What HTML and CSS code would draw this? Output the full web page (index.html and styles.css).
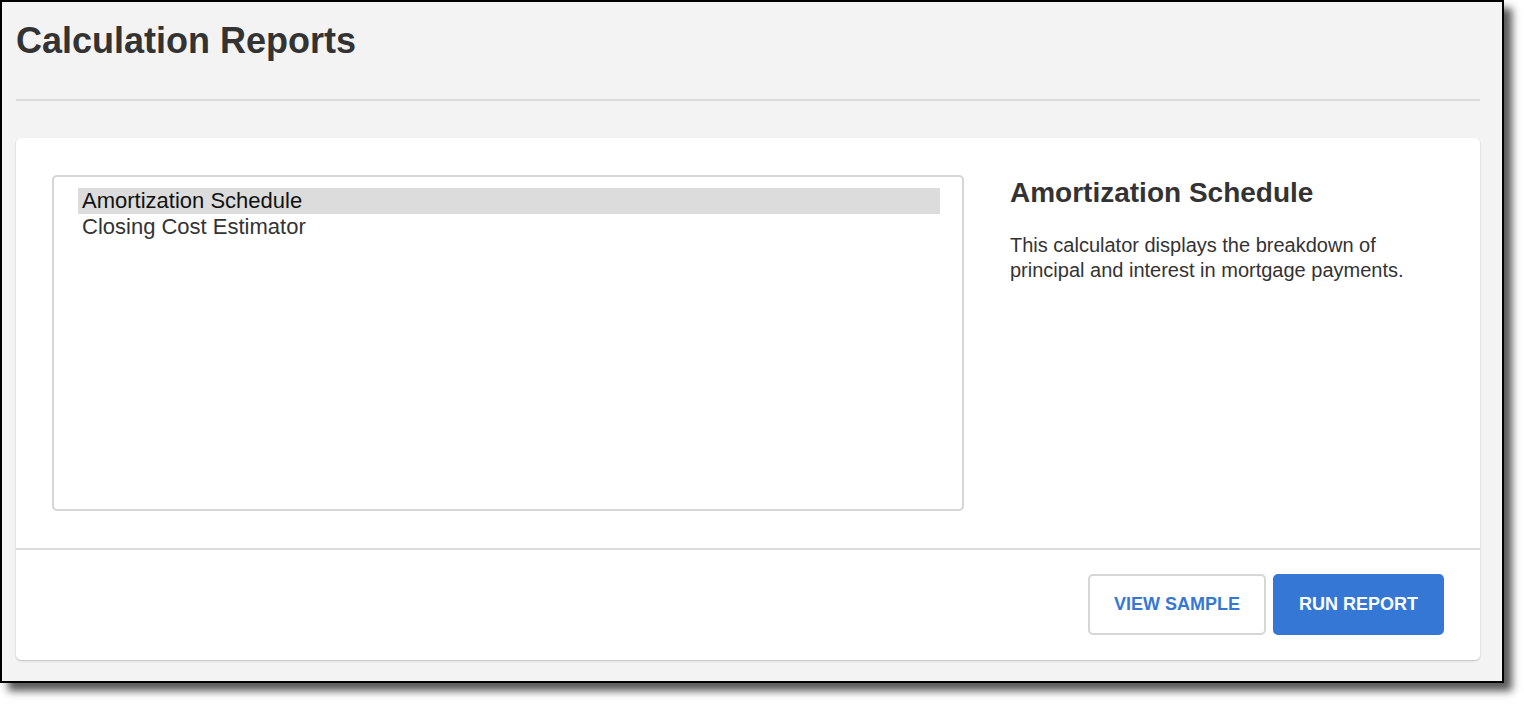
FILE: index.html
```html
<!DOCTYPE html>
<html lang="en">
<head>
<meta charset="utf-8">
<title>Calculation Reports</title>
<link rel="stylesheet" href="styles.css">
</head>
<body>
<div class="window">
  <h1 class="title">Calculation Reports</h1>
  <div class="rule"></div>
  <section class="card">
    <div class="card-body">
      <div class="listbox" role="listbox">
        <div class="option selected" role="option">Amortization Schedule</div>
        <div class="option" role="option">Closing Cost Estimator</div>
      </div>
      <div class="details">
        <h2 class="details-title">Amortization Schedule</h2>
        <p class="details-text">This calculator displays the breakdown of principal and interest in mortgage payments.</p>
      </div>
    </div>
    <div class="card-footer">
      <button class="btn btn-outline">VIEW SAMPLE</button>
      <button class="btn btn-primary">RUN REPORT</button>
    </div>
  </section>
</div>
</body>
</html>
```

FILE: styles.css
```css
html, body {
  margin: 0;
  padding: 0;
  background: #ffffff;
}

html {
  min-height: 100%;
}

body {
  min-height: 704px;
  box-sizing: border-box;
  padding-bottom: 21px;
  font-family: "Liberation Sans", Arial, sans-serif;
  color: #333333;
}

.window {
  width: 1504px;
  height: 683px;
  box-sizing: border-box;
  border: 2px solid #000000;
  background: #f3f3f3;
  box-shadow: 8px 8px 8px rgba(0, 0, 0, 0.66);
  padding: 18px 22px 0 14px;
}

.title {
  margin: 0;
  font-size: 36px;
  line-height: 42px;
  font-weight: 700;
  color: #333333;
}

.rule {
  height: 2px;
  background: #dcdcdc;
  margin: 37px 0;
}

.card {
  background: #ffffff;
  border-radius: 5px;
  box-shadow: 0 1px 2px rgba(0, 0, 0, 0.22);
}

.card-body {
  display: flex;
  gap: 46px;
  padding: 37px 36px;
}

.listbox {
  width: 912px;
  height: 336px;
  flex: none;
  box-sizing: border-box;
  border: 2px solid #d6d6d6;
  border-radius: 5px;
  padding: 11px 22px 0 24px;
}

.option {
  padding: 0 4px;
  font-size: 22px;
  line-height: 26px;
  color: #333333;
}

.option.selected {
  background: #dcdcdc;
  color: #111111;
}

.details {
  flex: 1;
  min-width: 0;
}

.details-title {
  margin: 2px 0 0;
  font-size: 28px;
  line-height: 32px;
  font-weight: 700;
  color: #333333;
}

.details-text {
  margin: 24px 0 0;
  font-size: 20px;
  line-height: 25px;
  color: #333333;
}

.card-footer {
  border-top: 2px solid #dcdcdc;
  padding: 24px 36px 25px;
  display: flex;
  justify-content: flex-end;
  gap: 7px;
}

.btn {
  height: 61px;
  box-sizing: border-box;
  padding: 0 24px;
  border-radius: 5px;
  font-family: "Liberation Sans", Arial, sans-serif;
  font-size: 18px;
  font-weight: 700;
  cursor: pointer;
}

.btn-outline {
  background: #ffffff;
  border: 2px solid #d6d6d6;
  color: #3577d4;
}

.btn-primary {
  background: #3577d4;
  border: 2px solid #3577d4;
  color: #ffffff;
}
```
